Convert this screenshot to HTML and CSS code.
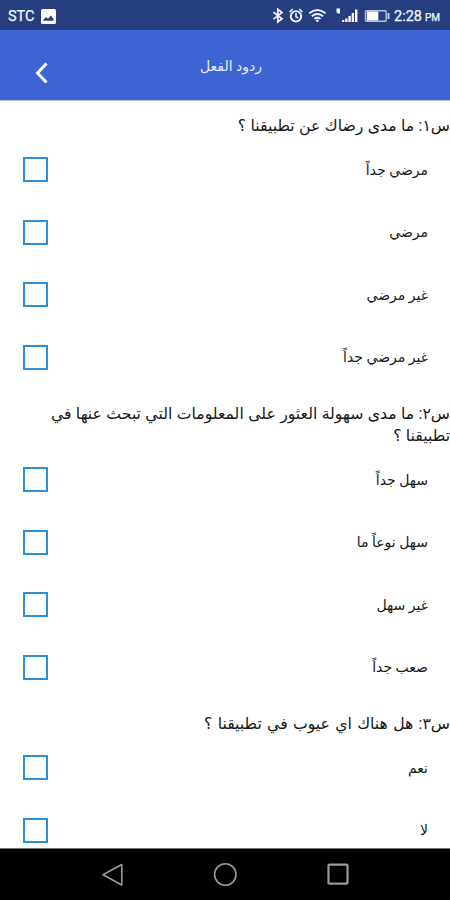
FILE: index.html
```
<!DOCTYPE html>
<html lang="ar" dir="rtl">
<head>
<meta charset="utf-8">
<title>ردود الفعل</title>
<link rel="stylesheet" href="styles.css">
</head>
<body>
<div class="status" dir="ltr">
  <span class="carrier">STC</span>
  <svg class="photo" width="15" height="15" viewBox="0 0 15 15"><rect width="15" height="15" rx="1.5" fill="#fff"/><path d="M2.5 11.8v-1.3L5 8l2 1.8 3-3.3 2.5 3.5v1.8z" fill="#263e80"/></svg>
  <svg class="icons" width="122" height="20" viewBox="270 6 122 20" fill="none" stroke="#f2f5fc">
    <path d="M273.5 12.3l8.5 6.5-4.200 3.200V9.300l4.200 3.200-8.500 6.600" stroke-width="1.700"/>
    <circle cx="296" cy="16.300" r="5.200" stroke-width="1.900"/><path d="M296 13v3.600l2.300 1.400M289.500 12l3.200-2.800M302.500 12l-3.200-2.800" stroke-width="1.600"/>
    <path d="M309.200 13.300q8.200-6.800 16.400 0M311.800 16.200q5.600-4.500 11.200 0M314.300 19q3.100-2.400 6.200 0" stroke-width="1.900"/><circle cx="317.400" cy="20.700" r="1.300" fill="#fff" stroke="none"/>
    <path d="M336.500 8.500h3.500v5h-2.500v-1h-1zM342 20h2.300v2H342zM345.200 18.500h2.300V22h-2.300zM348.400 16h2.400v6h-2.400zM351.700 13h2.300v9h-2.300zM355 9.500h2.400V22H355z" fill="#fff" stroke="none"/>
    <rect x="365.500" y="10.700" width="20.700" height="10.600" rx="1" stroke="#b8c4e2" stroke-width="1.400"/><path d="M366.800 11.500h11.500v9h-11.500z" fill="#fff" stroke="none"/><path d="M388.500 13v6" stroke="#b8c4e2" stroke-width="2"/>
  </svg>
  <span class="time">2:28</span><span class="pm">PM</span>
</div>
<header class="bar">
  <h1>ردود الفعل</h1>
  <svg class="back" width="14" height="22" viewBox="0 0 14 22" fill="none" stroke="#fff" stroke-width="3"><path d="M12.500 1.500L3.500 11l9 9.500"/></svg>
</header>
<main>
  <section>
    <h2 class="q1">س١: ما مدى رضاك عن تطبيقنا ؟</h2>
    <label><span>مرضي جداً</span><i></i></label>
    <label><span>مرضي</span><i></i></label>
    <label><span>غير مرضي</span><i></i></label>
    <label><span>غير مرضي جداً</span><i></i></label>
  </section>
  <section>
    <h2>س٢: ما مدى سهولة العثور على المعلومات التي تبحث عنها في<br>تطبيقنا ؟</h2>
    <label><span>سهل جداً</span><i></i></label>
    <label><span>سهل نوعاً ما</span><i></i></label>
    <label><span>غير سهل</span><i></i></label>
    <label><span>صعب جداً</span><i></i></label>
  </section>
  <section>
    <h2 class="q3">س٣: هل هناك اي عيوب في تطبيقنا ؟</h2>
    <label><span>نعم</span><i></i></label>
    <label><span>لا</span><i></i></label>
  </section>
</main>
<nav class="nav" dir="ltr">
  <svg width="24" height="24" viewBox="0 0 24 24"><path d="M21.800 1.500v20.500L3 11.700z"/></svg>
  <svg width="24" height="24" viewBox="0 0 24 24"><circle cx="12.300" cy="11.500" r="10.700"/></svg>
  <svg width="24" height="24" viewBox="0 0 24 24"><rect x="2.500" y="1.700" width="19" height="19" rx="1" stroke-width="2.200"/></svg>
</nav>
</body>
</html>
```
FILE: styles.css
```
* { box-sizing: border-box; }
body {
  margin: 0;
  height: 900px;
  display: flex;
  flex-direction: column;
  overflow: hidden;
  background: #fff;
  color: #171717;
  font-family: Roboto, "DejaVu Sans", sans-serif;
}
.status {
  flex: none;
  height: 30px;
  padding: 2px 10px 0 8px;
  display: flex;
  align-items: center;
  background: #263e80;
  color: #f2f5fc;
  font-size: 14.5px;
  font-weight: 400;
  -webkit-text-stroke: 0.25px #f2f5fc;
}
.carrier { width: 33px; }
.icons { margin: 0 2px 0 auto; }
.pm { font-size: 10px; margin: 3px 0 0 3px; }
.bar {
  flex: none;
  height: 71px;
  display: grid;
  grid-template-columns: 60px 1fr 60px;
  background: #3c65d3;
  border-bottom: 1px solid #b9c4e2;
}
.bar h1 {
  grid-column: 2;
  margin: 25px 0 0 0;
  text-align: center;
  font-size: 14px;
  line-height: 22px;
  font-weight: 400;
  color: #e6ecfb;
  position: relative;
  left: 6px;
}
.back { margin: 32px 12px 0 0; }
main { flex: 1; min-height: 0; overflow: hidden; }
h2 {
  margin: 0;
  padding: 14px 0 2px;
  font-size: 15.7px;
  line-height: 22px;
  font-weight: 400;
  word-spacing: 0.5px;
  white-space: nowrap;
}
.q1 { padding-bottom: 1.5px; }
.q3 { word-spacing: 1.4px; }
label {
  height: 62.5px;
  padding: 0 22px 0 23px;
  display: flex;
  justify-content: space-between;
  align-items: center;
  font-size: 14px;
}
label i {
  width: 25px;
  height: 25px;
  border: 2px solid #2b8fdc;
}
.nav {
  flex: none;
  height: 52px;
  padding: 0 100px;
  display: flex;
  justify-content: space-between;
  align-items: center;
  background: #000;
  border-top: 1px solid #777;
}
.nav svg { fill: none; stroke: #9a9a9a; stroke-width: 1.6; stroke-linejoin: round; }
```
